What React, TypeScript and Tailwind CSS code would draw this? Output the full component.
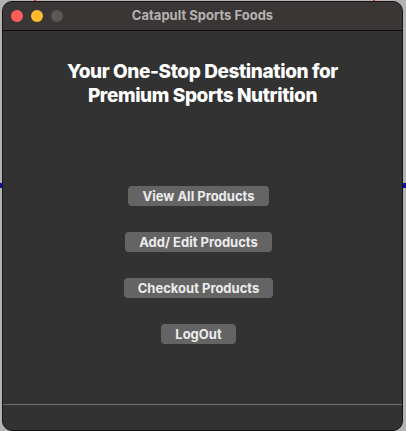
import React from 'react';

const actions = ['View All Products', 'Add/ Edit Products', 'Checkout Products', 'LogOut'];

export default function App() {
    return (
        <div
            className="relative h-[431px] w-[406px] overflow-hidden bg-[#b3b3b3] pt-px pl-[2px] pr-[3px]"
            style={{fontFamily: 'Inter, "Liberation Sans", sans-serif'}}
        >
            {/* background window edges peeking out */}
            <div className="absolute top-0 left-[34px] h-[2px] w-[2px] bg-[#e03030]"/>
            <div className="absolute top-0 left-[373px] h-[2px] w-[2px] bg-[#e03030]"/>
            <div className="absolute top-[183px] left-0 h-[5px] w-[2px] bg-[#1010a0]"/>
            <div className="absolute top-[183px] right-0 h-[5px] w-[3px] bg-[#1010a0]"/>

            <div className="relative flex h-[430px] flex-col overflow-hidden rounded-[10px] border border-[#151515] bg-[#323232]">
                {/* title bar */}
                <div className="relative flex h-[29px] shrink-0 items-center justify-center border-b border-[#0c0c0c] bg-[#3a3636]">
                    <div className="absolute left-[8px] top-[8px] flex gap-[8px]">
                        <span className="h-[12px] w-[12px] rounded-full bg-[#fe5f57]"/>
                        <span className="h-[12px] w-[12px] rounded-full bg-[#febc2e]"/>
                        <span className="h-[12px] w-[12px] rounded-full bg-[#5b5757]"/>
                    </div>
                    <span className="text-[13px] font-bold text-[#b5b1b1]">Catapult Sports Foods</span>
                </div>

                {/* content */}
                <div className="flex flex-1 flex-col items-center">
                    <h1 className="mt-[29px] text-center text-[19px] leading-[24px] font-extrabold tracking-[-0.4px] text-white">
                        Your One-Stop Destination for<br/>Premium Sports Nutrition
                    </h1>
                    <div className="mt-[78px] mr-[8px] flex flex-col items-center gap-[26px]">
                        {actions.map(label => (
                            <button
                                key={label}
                                type="button"
                                className="h-[20px] rounded-[4px] bg-[#646464] px-[14px] text-[13px] leading-[20px] font-bold text-[#ececec]"
                            >
                                {label}
                            </button>
                        ))}
                    </div>
                </div>

                {/* status strip */}
                <div className="h-[26px] shrink-0 border-t border-[#6f6f6f]"/>
            </div>
        </div>
    );
}
